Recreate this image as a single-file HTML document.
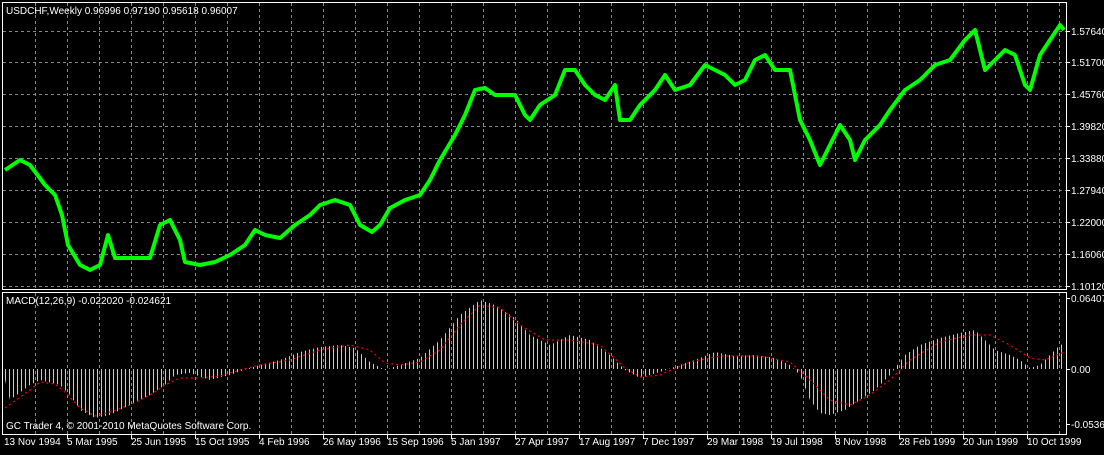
<!DOCTYPE html><html><head><style>
body{margin:0;background:#000;width:1104px;height:450px;overflow:hidden;font-family:"Liberation Sans",sans-serif}
</style></head><body>
<svg width="1104" height="450" xmlns="http://www.w3.org/2000/svg" font-family="Liberation Sans, sans-serif" font-size="10" fill="#fff">
<defs>
<pattern id="st" width="4" height="10" patternUnits="userSpaceOnUse"><rect x="1" y="0" width="1" height="10" fill="#c8c8c8"/></pattern>
</defs>
<rect width="1104" height="450" fill="#000"/>
<g stroke="#7f8a99" stroke-dasharray="3,3" stroke-width="1">
<path d="M35.5 3V289M67.5 3V289M99.5 3V289M131.5 3V289M163.5 3V289M195.5 3V289M227.5 3V289M259.5 3V289M291.5 3V289M323.5 3V289M355.5 3V289M387.5 3V289M419.5 3V289M451.5 3V289M483.5 3V289M515.5 3V289M547.5 3V289M579.5 3V289M611.5 3V289M643.5 3V289M675.5 3V289M707.5 3V289M739.5 3V289M771.5 3V289M803.5 3V289M835.5 3V289M867.5 3V289M899.5 3V289M931.5 3V289M963.5 3V289M995.5 3V289M1027.5 3V289M1059.5 3V289"/>
<path d="M35.5 293V434M67.5 293V434M99.5 293V434M131.5 293V434M163.5 293V434M195.5 293V434M227.5 293V434M259.5 293V434M291.5 293V434M323.5 293V434M355.5 293V434M387.5 293V434M419.5 293V434M451.5 293V434M483.5 293V434M515.5 293V434M547.5 293V434M579.5 293V434M611.5 293V434M643.5 293V434M675.5 293V434M707.5 293V434M739.5 293V434M771.5 293V434M803.5 293V434M835.5 293V434M867.5 293V434M899.5 293V434M931.5 293V434M963.5 293V434M995.5 293V434M1027.5 293V434M1059.5 293V434"/>
<path d="M3 31.5H1066M3 62.5H1066M3 94.5H1066M3 126.5H1066M3 158.5H1066M3 190.5H1066M3 222.5H1066M3 254.5H1066M3 286.5H1066"/>
</g>
<g fill="none" stroke="#fff" stroke-width="1">
<rect x="2.5" y="2.5" width="1064" height="287"/>
<rect x="2.5" y="292.5" width="1064" height="142"/>
<path d="M1066 31.5h4M1066 62.5h4M1066 94.5h4M1066 126.5h4M1066 158.5h4M1066 190.5h4M1066 222.5h4M1066 254.5h4M1066 286.5h4M1066 298.5h4M1066 369.5h4M1066 424.5h4"/>
<path d="M67.5 434v5M131.5 434v5M195.5 434v5M259.5 434v5M323.5 434v5M387.5 434v5M451.5 434v5M515.5 434v5M579.5 434v5M643.5 434v5M707.5 434v5M771.5 434v5M835.5 434v5M899.5 434v5M963.5 434v5M1027.5 434v5"/>
</g>
<polyline fill="none" stroke="#00ff00" stroke-width="4" stroke-linejoin="round" points="5,170 20,160 30,165 45,185 55,195 62,215 68,245 80,265 90,270 100,265 108,235 115,258 130,258 150,258 160,225 170,220 180,240 185,262 200,265 215,262 230,255 245,245 255,230 265,235 280,238 295,225 310,215 320,205 335,200 350,205 360,225 372,232 380,225 390,208 405,200 420,195 430,180 440,160 455,135 465,115 475,90 485,88 495,95 505,95 515,95 525,115 530,120 540,105 555,95 565,70 575,70 585,85 595,95 605,100 615,85 620,120 630,120 640,105 655,90 665,75 675,90 690,85 705,65 715,70 725,75 735,85 745,80 755,60 765,55 775,70 790,70 800,120 810,140 820,165 830,145 840,125 850,140 855,160 865,140 880,125 890,110 905,90 920,80 935,65 950,60 965,40 975,30 985,70 995,60 1005,50 1015,55 1025,85 1030,90 1040,55 1050,40 1060,25 1064,30"/>
<polygon fill="url(#st)" points="3,369 5,380 10,400 30,385 40,380 60,385 70,395 80,410 95,418 110,415 130,405 150,395 165,385 175,375 190,373 210,380 230,375 250,368 260,365 280,360 300,352 320,347 340,345 355,348 370,362 385,370 400,365 420,358 440,340 460,315 480,300 495,305 515,318 530,335 550,345 570,335 590,340 610,355 625,370 640,378 660,372 680,365 700,358 715,352 735,356 755,355 775,358 790,365 800,375 810,400 820,413 830,415 845,410 860,400 875,390 890,375 905,355 920,345 940,338 960,333 975,330 985,340 995,350 1010,355 1020,360 1030,368 1040,365 1050,355 1060,345 1064,344 1064,369"/>
<polyline fill="none" stroke="#ff0000" stroke-width="1.2" stroke-dasharray="2,3" points="5,408 30,390 40,382 55,384 65,392 80,408 95,416 110,412 130,405 150,395 165,385 180,378 200,378 220,376 240,370 260,365 290,360 320,350 350,345 370,350 385,363 400,365 420,362 440,350 460,325 480,305 500,308 520,325 545,340 570,340 600,345 625,368 640,377 660,375 690,362 720,356 760,356 790,362 810,380 830,400 850,405 870,395 890,380 910,360 940,342 970,335 990,335 1010,345 1030,358 1045,360 1064,352"/>
<text x="6" y="14">USDCHF,Weekly  0.96996 0.97190 0.95618 0.96007</text>
<text x="6" y="304">MACD(12,26,9) -0.022020 -0.024621</text>
<text x="6" y="429">GC Trader 4, © 2001-2010 MetaQuotes Software Corp.</text>
<g>
<text x="1071" y="35">1.57640</text><text x="1071" y="66">1.51700</text><text x="1071" y="98">1.45760</text><text x="1071" y="130">1.39820</text><text x="1071" y="162">1.33880</text><text x="1071" y="194">1.27940</text><text x="1071" y="226">1.22000</text><text x="1071" y="258">1.16060</text><text x="1071" y="290">1.10120</text>
<text x="1071" y="302">0.06407</text><text x="1071" y="373">0.00</text><text x="1071" y="428">-0.05363</text>
</g>
<g>
<text x="4" y="445">13 Nov 1994</text><text x="67" y="445">5 Mar 1995</text><text x="131" y="445">25 Jun 1995</text><text x="195" y="445">15 Oct 1995</text><text x="259" y="445">4 Feb 1996</text><text x="323" y="445">26 May 1996</text><text x="387" y="445">15 Sep 1996</text><text x="451" y="445">5 Jan 1997</text><text x="515" y="445">27 Apr 1997</text><text x="579" y="445">17 Aug 1997</text><text x="643" y="445">7 Dec 1997</text><text x="707" y="445">29 Mar 1998</text><text x="771" y="445">19 Jul 1998</text><text x="835" y="445">8 Nov 1998</text><text x="899" y="445">28 Feb 1999</text><text x="963" y="445">20 Jun 1999</text><text x="1027" y="445">10 Oct 1999</text>
</g>
</svg>
</body></html>
